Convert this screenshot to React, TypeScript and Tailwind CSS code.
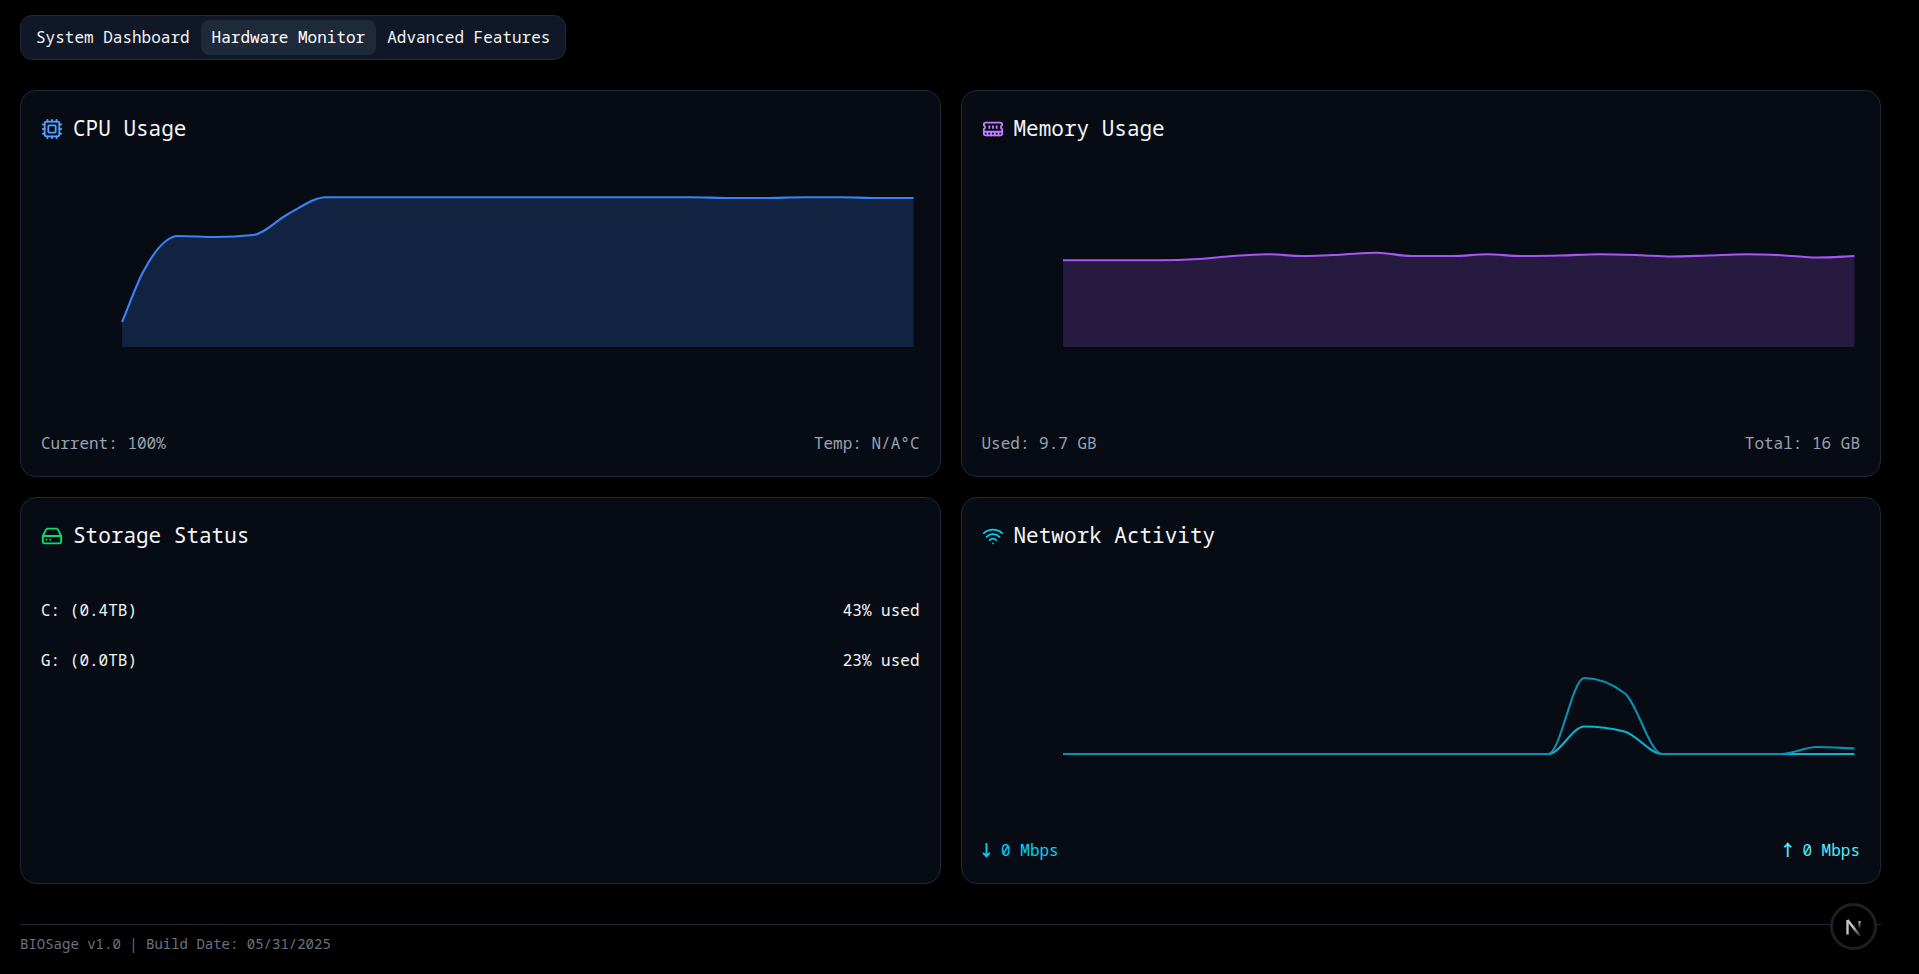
import React from "react";
import type { ReactNode } from "react";
import { Cpu, HardDrive, Wifi } from "lucide-react";

type Point = [number, number];

const CHART_BASE = 156;

const cpuPoints: Point[] = [
  [81, 131], [102, 81], [137, 45], [175, 46], [212, 44], [247, 23], [285, 6.2],
  [322, 6.2], [648, 6.2], [690, 7], [722, 7], [764, 6.2], [800, 6.2], [835, 7], [872, 7],
];

const memoryPoints: Point[] = [
  [81, 69.2], [175, 69.2], [217, 68], [248, 65.2], [285, 63.2], [321, 65], [358, 63.7],
  [395, 61.7], [429, 65], [471, 65], [505, 63.2], [539, 65], [578, 64.5], [617, 63.2],
  [658, 64.2], [689, 65.5], [725, 64.5], [764, 63.2], [799, 64.2], [835, 66.5], [872, 65],
];

const downloadPoints: Point[] = [
  [81, 156], [566, 156], [602, 128.5], [642, 133.5], [680, 156], [872, 156],
];

const uploadPoints: Point[] = [
  [81, 156], [566, 156], [602, 80], [642, 95], [680, 156], [799, 156], [834, 149], [872, 150.5],
];

// Monotone cubic interpolation: the curve never overshoots its data points.
function monotonePath(points: Point[]): string {
  const n = points.length;
  const slopes: number[] = [];
  for (let i = 0; i < n - 1; i++) {
    slopes.push((points[i + 1][1] - points[i][1]) / (points[i + 1][0] - points[i][0]));
  }
  const tangents = points.map((_, i) => {
    if (i === 0) return slopes[0];
    if (i === n - 1) return slopes[n - 2];
    const a = slopes[i - 1];
    const b = slopes[i];
    if (a * b <= 0) return 0;
    const h0 = points[i][0] - points[i - 1][0];
    const h1 = points[i + 1][0] - points[i][0];
    const p = (a * h1 + b * h0) / (h0 + h1);
    return 2 * Math.sign(a) * Math.min(Math.abs(a), Math.abs(b), Math.abs(p) / 2);
  });
  let d = `M${points[0][0]},${points[0][1]}`;
  for (let i = 0; i < n - 1; i++) {
    const [x0, y0] = points[i];
    const [x1, y1] = points[i + 1];
    const dx = (x1 - x0) / 3;
    d += `C${x0 + dx},${y0 + dx * tangents[i]} ${x1 - dx},${y1 - dx * tangents[i + 1]} ${x1},${y1}`;
  }
  return d;
}

function Chart({ label, children }: { label: string; children: ReactNode }) {
  return (
    <svg
      role="img"
      aria-label={label}
      viewBox="0 0 878 200"
      preserveAspectRatio="none"
      className="mt-[45px] block h-[200px] w-full"
    >
      {children}
    </svg>
  );
}

function Area({ points, color }: { points: Point[]; color: string }) {
  const line = monotonePath(points);
  const first = points[0][0];
  const last = points[points.length - 1][0];
  return (
    <>
      <path d={`${line}L${last},${CHART_BASE}L${first},${CHART_BASE}Z`} fill={color} fillOpacity={0.2} />
      <path d={line} fill="none" stroke={color} strokeWidth={2.1} />
    </>
  );
}

function MemoryIcon({ className }: { className: string }) {
  return (
    <svg
      viewBox="0 0 24 24"
      fill="none"
      stroke="currentColor"
      strokeWidth={2}
      strokeLinecap="round"
      strokeLinejoin="round"
      aria-hidden="true"
      className={className}
    >
      <path d="M6 19v-3M10 19v-3M14 19v-3M18 19v-3M8 11V9M16 11V9M12 11V9M2 15h20" />
      <path d="M2 7a2 2 0 0 1 2-2h16a2 2 0 0 1 2 2v1.1a2 2 0 0 0 0 3.837V17a2 2 0 0 1-2 2H4a2 2 0 0 1-2-2v-5.1a2 2 0 0 0 0-3.837Z" />
    </svg>
  );
}

function Card({ icon, title, children }: { icon: ReactNode; title: string; children: ReactNode }) {
  return (
    <section className="rounded-2xl border border-gray-800 bg-[#070c14] p-5">
      <h2 className="flex h-[35px] items-center gap-[10px] text-[21px] text-gray-100">
        {icon}
        {title}
      </h2>
      {children}
    </section>
  );
}

function Stats({ left, right }: { left: ReactNode; right: ReactNode }) {
  return (
    <div className="mt-10 flex justify-between text-base leading-[25px] text-gray-400">
      {left}
      {right}
    </div>
  );
}

function Rate({ arrow, value, className }: { arrow: string; value: string; className: string }) {
  return (
    <span className={className}>
      <span className="inline-flex w-[10px] justify-center font-['Noto_Sans_Mono_CJK_SC','Noto_Sans_CJK_SC',monospace] leading-none font-bold">
        {arrow}
      </span>{" "}
      {value}
    </span>
  );
}

const tabs = ["System Dashboard", "Hardware Monitor", "Advanced Features"];

const drives = [
  { name: "C: (0.4TB)", used: "43% used" },
  { name: "G: (0.0TB)", used: "23% used" },
];

export default function App() {
  const [active, setActive] = React.useState("Hardware Monitor");

  return (
    <div className="min-h-screen bg-black pt-[15px] pr-[38px] pb-5 pl-5 font-['Noto_Sans_Mono','Liberation_Mono',monospace] text-gray-100">
      <div role="tablist" className="inline-flex rounded-xl border border-gray-800 bg-gray-900 p-1 align-top">
        {tabs.map((tab) => (
          <button
            key={tab}
            type="button"
            role="tab"
            aria-selected={tab === active}
            onClick={() => setActive(tab)}
            className={
              tab === active
                ? "h-[35px] rounded-lg bg-gray-800 px-[11px] pb-0.5 text-base text-white"
                : "h-[35px] rounded-lg px-[11px] pb-0.5 text-base text-gray-100"
            }
          >
            {tab}
          </button>
        ))}
      </div>

      <main className="mt-[30px] grid grid-cols-2 gap-5">
        <Card icon={<Cpu className="size-[22px] text-blue-400" />} title="CPU Usage">
          <Chart label="CPU usage over time">
            <Area points={cpuPoints} color="#3b82f6" />
          </Chart>
          <Stats left={<span>Current: 100%</span>} right={<span>Temp: N/A°C</span>} />
        </Card>

        <Card icon={<MemoryIcon className="size-[22px] text-purple-400" />} title="Memory Usage">
          <Chart label="Memory usage over time">
            <Area points={memoryPoints} color="#a855f7" />
          </Chart>
          <Stats left={<span>Used: 9.7 GB</span>} right={<span>Total: 16 GB</span>} />
        </Card>

        <Card icon={<HardDrive className="size-[22px] text-green-400" />} title="Storage Status">
          <ul className="mt-[45px] flex flex-col gap-[25px]">
            {drives.map((drive) => (
              <li key={drive.name} className="flex justify-between text-base leading-[25px]">
                <span>{drive.name}</span>
                <span>{drive.used}</span>
              </li>
            ))}
          </ul>
        </Card>

        <Card icon={<Wifi className="size-[22px] text-cyan-400" />} title="Network Activity">
          <Chart label="Network activity over time">
            <path d={monotonePath(downloadPoints)} fill="none" stroke="#06b6d4" strokeWidth={2.1} />
            <path d={monotonePath(uploadPoints)} fill="none" stroke="#0891b2" strokeWidth={2.1} />
          </Chart>
          <Stats
            left={<Rate arrow="↓" value="0 Mbps" className="text-cyan-400" />}
            right={<Rate arrow="↑" value="0 Mbps" className="text-cyan-300" />}
          />
        </Card>
      </main>

      <footer className="mt-10 border-t border-gray-800 pt-[9px] text-sm text-gray-500">
        BIOSage v1.0 | Build Date: 05/31/2025
      </footer>

      <button
        type="button"
        aria-label="Open Next.js Dev Tools"
        className="fixed right-[42px] bottom-6 flex size-[47px] items-center justify-center rounded-full border-3 border-[#1f1f1f] bg-black"
      >
        <svg viewBox="0 0 18 20" fill="none" className="h-5 w-[18px]" aria-hidden="true">
          <defs>
            <linearGradient id="diagonal" x1="9" y1="10" x2="16" y2="19" gradientUnits="userSpaceOnUse">
              <stop stopColor="#c4c4c4" />
              <stop offset="1" stopColor="#c4c4c4" stopOpacity="0.1" />
            </linearGradient>
            <linearGradient id="stem" x1="15" y1="3" x2="15" y2="12" gradientUnits="userSpaceOnUse">
              <stop stopColor="#c4c4c4" />
              <stop offset="1" stopColor="#c4c4c4" stopOpacity="0" />
            </linearGradient>
          </defs>
          <path d="M2.5 17.5V3" stroke="#c4c4c4" strokeWidth="2.4" />
          <path d="M2.5 3L15 19" stroke="url(#diagonal)" strokeWidth="2.4" />
          <path d="M14.5 4V14" stroke="url(#stem)" strokeWidth="2.4" />
        </svg>
      </button>
    </div>
  );
}
